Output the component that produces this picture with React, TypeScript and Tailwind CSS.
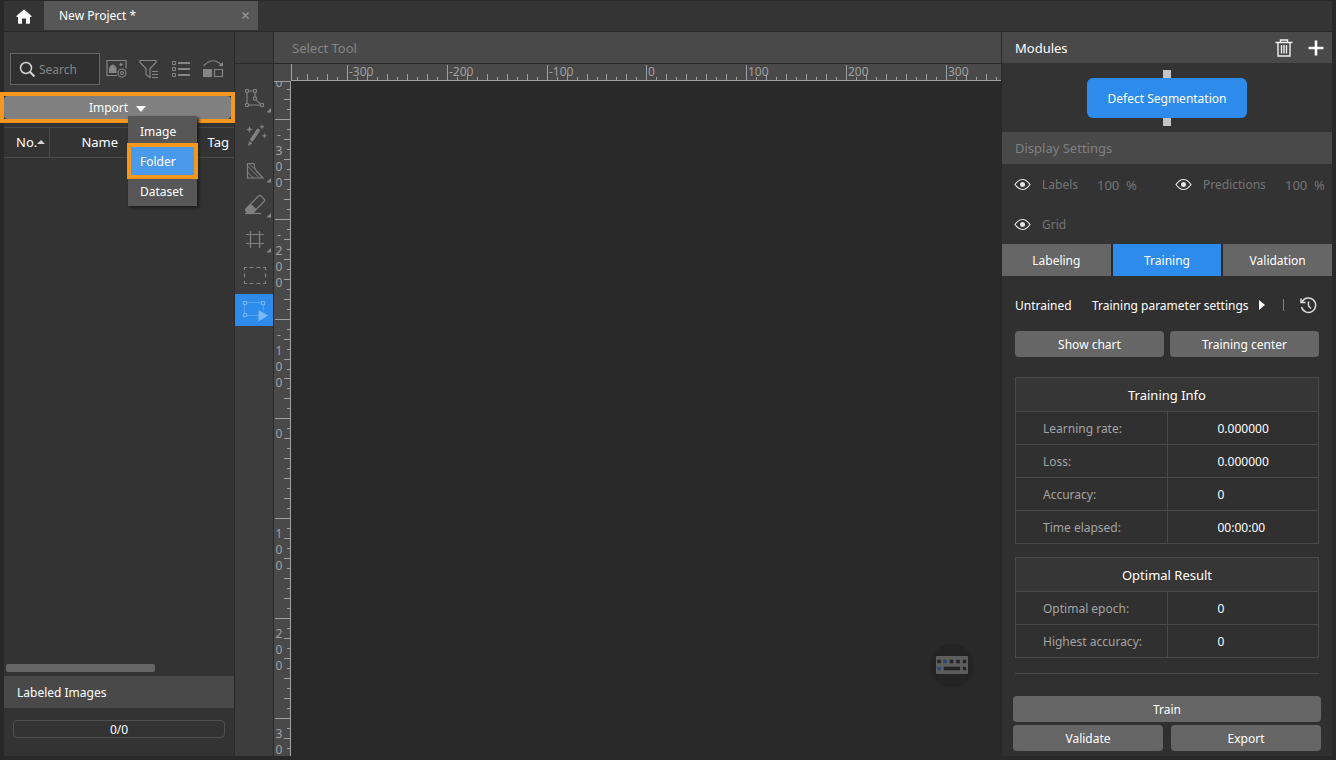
import { useEffect, useState } from "react";
import type { ReactNode } from "react";

const STEP = 9.98;
const ORIGIN_X = 355.9;
const ORIGIN_Y = 337.9;

// space taken by the panels and bars around the canvas
const SIDE_WIDTH = 626;
const BARS_HEIGHT = 85;

const tools = [
  "Polygon Tool",
  "Smart Labeling Tool",
  "Mask Tool",
  "Eraser Tool",
  "Grid Tool",
  "ROI Tool",
  "Select Tool",
];

const trainingInfo = [
  { label: "Learning rate:", value: "0.000000" },
  { label: "Loss:", value: "0.000000" },
  { label: "Accuracy:", value: "0" },
  { label: "Time elapsed:", value: "00:00:00" },
];

const optimalResult = [
  { label: "Optimal epoch:", value: "0" },
  { label: "Highest accuracy:", value: "0" },
];

function useCanvasSize() {
  const measure = () => ({
    width: window.innerWidth - SIDE_WIDTH,
    height: window.innerHeight - BARS_HEIGHT,
  });
  const [size, setSize] = useState(measure);

  useEffect(() => {
    const onResize = () => setSize(measure());
    window.addEventListener("resize", onResize);
    return () => window.removeEventListener("resize", onResize);
  }, []);

  return size;
}

// ruler marks that fall between 0 and length
function getMarks(origin: number, length: number) {
  const marks = [];
  for (let i = -45; origin + i * STEP < length; i++) {
    marks.push({ i, pos: Math.floor(origin + i * STEP) });
  }
  return marks;
}

function tickLength(i: number) {
  if (i % 10 === 0) return 16;
  return i % 2 === 0 ? 7 : 4;
}

function HorizontalRuler({ width }: { width: number }) {
  const marks = getMarks(ORIGIN_X, width).filter((mark) => mark.pos > 0);

  return (
    <svg className="h-[17px] min-w-0 flex-1" fill="#a0a0a0">
      <rect x="0" y="0" width="1" height="16" />
      <rect x="0" y="16" width="100%" height="1" />
      {marks.map(({ i, pos }) => (
        <g key={i}>
          <rect
            x={pos}
            y={17 - tickLength(i)}
            width="1"
            height={tickLength(i)}
          />
          {i % 10 === 0 && (
            <text x={pos + 2} y="12" fontSize="12">
              {i * 10}
            </text>
          )}
        </g>
      ))}
    </svg>
  );
}

function VerticalRuler({ height }: { height: number }) {
  const marks = getMarks(ORIGIN_Y, height);

  return (
    <svg className="w-[17px] shrink-0 bg-[#494949]" fill="#a0a0a0">
      <rect x="0" y="0" width="17" height="1" />
      <rect x="16" y="0" width="1" height="100%" />
      {marks
        .filter((mark) => mark.pos > 0)
        .map(({ i, pos }) => (
          <rect
            key={i}
            x={17 - tickLength(i)}
            y={pos}
            width={tickLength(i)}
            height="1"
          />
        ))}
      {marks
        .filter((mark) => mark.i % 10 === 0)
        .flatMap(({ i, pos }) =>
          String(i * 10)
            .split("")
            .map((char, n) => ({ char, id: `${i}-${n}`, y: pos + 20 + n * 16 })),
        )
        .filter(({ y }) => y > 2 && y < height)
        .map(({ char, id, y }) => (
          <text key={id} x="5" y={y} fontSize="12" textAnchor="middle">
            {char}
          </text>
        ))}
    </svg>
  );
}

function ToolIcon({ name }: { name: string }) {
  const corner = <path d="M36 24v4.500h-4.500z" fill="#8a8a8a" stroke="none" />;

  return (
    <svg
      width="38"
      height="32"
      viewBox="0 0 38 32"
      fill="none"
      stroke="#808080"
      strokeWidth="1.2"
    >
      {name === "Polygon Tool" && (
        <>
          <path d="M12 9v10M14 7h4M20 9v4M21.400 16.400l4.200 3.600M14 21h11" />
          <circle cx="12" cy="7" r="1.700" />
          <circle cx="20" cy="7" r="1.700" />
          <circle cx="20" cy="14.500" r="1.700" />
          <circle cx="27" cy="21" r="1.700" />
          <circle cx="12" cy="21" r="1.700" />
          {corner}
        </>
      )}
      {name === "Smart Labeling Tool" && (
        <>
          <path d="M17 20.500l6-9" strokeWidth="3.600" strokeLinecap="round" />
          <path d="M13.500 26.500l.8-4 2.700 1.800z" fill="#808080" strokeWidth=".6" />
          <path
            d="M14.500 7.500l.8 2.200 2.200.8-2.200.8-.8 2.200-.8-2.200-2.200-.8 2.200-.8zM27 5.500l.6 1.700 1.700.6-1.700.6-.6 1.700-.6-1.700-1.700-.6 1.700-.6zM29.500 14.500l.6 1.700 1.700.6-1.700.6-.6 1.700-.6-1.700-1.700-.6 1.700-.6z"
            fill="#808080"
            strokeWidth=".4"
          />
        </>
      )}
      {name === "Mask Tool" && (
        <>
          <path d="M12.500 9.500h6.500q0 5 3 8l6 6.500h-15.500z" />
          <path d="M14.500 10l5 5M12.500 12l12 12M12.500 18l6 6" strokeWidth="1" />
          {corner}
        </>
      )}
      {name === "Eraser Tool" && (
        <>
          <path d="M11 20L23.500 7q1.300-1.200 2.500 0l3 3q1.200 1.200 0 2.500L18 23.500q-1 1-2 1h-1.500q-1 0-2-1l-1.500-1.500q-.8-1 0-2z" />
          <path
            d="M15.500 15.500l5.500 5-3.500 4h-4l-2.500-2.500v-2z"
            fill="#808080"
          />
          <path d="M10 24.500h16" />
          {corner}
        </>
      )}
      {name === "Grid Tool" && (
        <>
          <path d="M15.500 7v17M24.500 7v17M11 10.500h18M11 19.500h18" />
          {corner}
        </>
      )}
      {name === "ROI Tool" && (
        <path d="M9.500 11V8.500h2.500M14.500 8.500h4M21.500 8.500h4M28 8.500h2.500V11M30.500 14.500v4M30.500 22v2.500H28M25.500 24.500h-4M18.500 24.500h-4M12 24.500H9.500V22M9.500 18.500v-4" />
      )}
      {name === "Select Tool" && (
        <g stroke="#6fb2f5">
          <path d="M12 8.500h14M9.500 11v8M28.500 11v5M12 21.500h12" opacity=".6" />
          <path d="M8.500 7.500h3v3h-3zM26.500 7.500h3v3h-3zM8.500 19.500h3v3h-3z" />
          <path d="M23.500 16v11.500l9.500-6z" fill="#7ab8f6" stroke="none" />
        </g>
      )}
    </svg>
  );
}

function EyeIcon() {
  return (
    <svg width="17" height="13" viewBox="0 0 17 13" fill="none" stroke="#e6e6e6">
      <path d="M1 6.500Q4.500 1.500 8.500 1.500T16 6.500Q12.500 11.500 8.500 11.500T1 6.500z" strokeWidth="1.200" />
      <circle cx="8.500" cy="6.500" r="2.500" fill="#e6e6e6" stroke="none" />
    </svg>
  );
}

function PanelButton({
  children,
  className,
}: {
  children: ReactNode;
  className: string;
}) {
  return (
    <button
      className={`h-[26px] rounded bg-[#666] pt-0.5 text-center ${className}`}
    >
      {children}
    </button>
  );
}

function InfoTable({
  title,
  rows,
}: {
  title: string;
  rows: { label: string; value: string }[];
}) {
  return (
    <table className="w-full border-collapse border border-[#4a4a4a]">
      <thead>
        <tr className="h-[34px] bg-[#363636]">
          <th colSpan={2} className="pt-0.5 text-[13px] font-normal">
            {title}
          </th>
        </tr>
      </thead>
      <tbody>
        {rows.map((row) => (
          <tr key={row.label} className="h-[33px] border-t border-[#4a4a4a]">
            <th
              scope="row"
              className="w-1/2 pt-0.5 pl-[27px] text-left font-normal text-[#a3a3a3]"
            >
              {row.label}
            </th>
            <td className="w-1/2 border-l border-[#4a4a4a] pt-0.5 pl-[50px]">
              {row.value}
            </td>
          </tr>
        ))}
      </tbody>
    </table>
  );
}

function ImagePanel() {
  return (
    <aside className="flex w-[230px] shrink-0 flex-col bg-[#333]">
      <div className="flex h-16 items-end bg-[#393939] pb-[11px] pl-1.5">
        <label className="flex h-8 w-[90px] items-center gap-[3px] border border-[#666] bg-[#303030] pl-2">
          <svg width="17" height="17" viewBox="0 0 17 17" fill="none" stroke="#d6d6d6" strokeWidth="1.500">
            <circle cx="7" cy="7" r="5.500" />
            <path d="M11 11l4.500 4.500" strokeWidth="2" />
          </svg>
          <input
            type="text"
            aria-label="Search"
            placeholder="Search"
            className="w-14 bg-transparent pt-0.5 placeholder:text-[#858585] focus:outline-none"
          />
        </label>
        <div className="flex h-8 items-center gap-3 pl-1.5">
          <button aria-label="Image settings">
            <svg width="21" height="20" viewBox="0 0 21 20" fill="none" stroke="#858585" strokeWidth="1.200">
              <path d="M11 16.500H1V1.500h19v8" />
              <path d="M3 14V9.500Q6.500 2 10.500 9v5z" fill="#858585" stroke="none" />
              <circle cx="15" cy="5.500" r="1.500" fill="#858585" stroke="none" />
              <circle cx="16" cy="14" r="4" />
              <circle cx="16" cy="14" r="1.500" />
            </svg>
          </button>
          <button aria-label="Filter">
            <svg width="20" height="20" viewBox="0 0 20 20" fill="none" stroke="#858585" strokeWidth="1.200">
              <path d="M1 1.500h16v2l-6 6v9l-4-3v-6l-6-6zM13 12.500h6M13 15.500h6M13 18.500h6" />
            </svg>
          </button>
          <button aria-label="List view">
            <svg width="20" height="20" viewBox="0 0 20 20" fill="none" stroke="#858585">
              <path d="M1.500 2.500h3v3h-3zM1.500 8.500h3v3h-3zM1.500 14.500h3v3h-3z" />
              <path d="M7 4h12M7 10h12M7 16h12" strokeWidth="2" />
            </svg>
          </button>
          <button aria-label="Swap view">
            <svg width="21" height="20" viewBox="0 0 21 20" fill="none" stroke="#858585" strokeWidth="1.200">
              <path d="M.5 7Q9.500 -3 18.500 6" />
              <path d="M20 3v4.500l-4.500-1z" fill="#858585" stroke="none" />
              <path d="M0 10h9v8H0z" fill="#858585" stroke="none" />
              <path d="M11.500 10.500h8v7h-8z" />
            </svg>
          </button>
        </div>
      </div>

      <div className="relative mr-[3px]">
        <button className="flex h-[23px] w-full items-center justify-center gap-2 rounded-sm bg-[#808080]">
          Import
          <svg width="10" height="6" viewBox="0 0 10 6" className="mt-0.5">
            <path d="M0 0h10L5 6z" fill="#fff" />
          </svg>
        </button>
        <div className="pointer-events-none absolute -inset-1 border-4 border-[#f5961d]" />

        {/* Import menu */}
        <ul className="absolute top-5 left-[124px] z-10 w-[69px] bg-[#575757] shadow-[2px_2px_3px_#1c1c1c]">
          {["Image", "Folder", "Dataset"].map((item) => (
            <li key={item} className="relative">
              <button
                className={`h-[30px] w-full pt-0.5 pl-3 text-left ${
                  item === "Folder" ? "bg-[#4a9aec]" : ""
                }`}
              >
                {item}
              </button>
              {item === "Folder" && (
                <div className="pointer-events-none absolute -inset-x-px -inset-y-[3px] border-4 border-[#f5961d]" />
              )}
            </li>
          ))}
        </ul>
      </div>

      <table className="mt-2 w-full table-fixed border-collapse">
        <thead>
          <tr className="h-[30px] border-y border-[#4a4a4a]">
            <th className="w-[45px] border-r border-[#4a4a4a] pl-3 text-left font-normal">
              <span className="flex items-center text-[13px]">
                No.
                <svg width="8" height="4" viewBox="0 0 8 4">
                  <path d="M0 4h8L4 0z" fill="#d6d6d6" />
                </svg>
              </span>
            </th>
            <th className="w-[101px] text-[13px] font-normal">Name</th>
            <th className="pr-[5px] text-right text-[13px] font-normal">Tag</th>
          </tr>
        </thead>
      </table>

      <div className="flex flex-1 flex-col justify-end px-0.5 pb-1">
        <div className="h-2 w-[149px] rounded-xs bg-[#666]" />
      </div>

      <h2 className="flex h-8 items-center bg-[#494949] pt-0.5 pl-[13px]">
        Labeled Images
      </h2>
      <div className="px-[9px] pt-3 pb-[18px]">
        <div
          role="progressbar"
          aria-label="Labeled Images"
          aria-valuenow={0}
          className="flex h-[18px] items-center justify-center rounded border border-[#505050] pt-0.5"
        >
          0/0
        </div>
      </div>
    </aside>
  );
}

function ModulePanel() {
  const [tab, setTab] = useState("Training");

  return (
    <aside className="flex w-[330px] shrink-0 flex-col bg-[#303030]">
      <div className="flex h-[31px] items-center bg-[#494949] pr-2 pl-[13px]">
        <h2 className="flex-1 pt-0.5 text-[13px]">Modules</h2>
        <button aria-label="Delete module" className="mr-[15px]">
          <svg width="18" height="18" viewBox="0 0 18 18" fill="none" stroke="#f0f0f0" strokeWidth="1.400">
            <path d="M.5 3.500h17M5.500 3V1h7v2M3 4v13h12V4M6.500 6v8.500M9 6v8.500M11.500 6v8.500" />
          </svg>
        </button>
        <button aria-label="Add module">
          <svg width="16" height="16" viewBox="0 0 16 16">
            <path d="M8 .5v15M.5 8h15" stroke="#fff" strokeWidth="2.600" />
          </svg>
        </button>
      </div>

      <div className="flex h-[69px] flex-col items-center justify-center bg-[#333]">
        <div className="h-2 w-2 bg-[#c4c4c4]" />
        <button className="h-10 w-40 rounded-md bg-[#2d8ceb] pt-0.5">
          Defect Segmentation
        </button>
        <div className="h-2 w-2 bg-[#c4c4c4]" />
      </div>

      <h2 className="flex h-8 items-center bg-[#494949] pt-0.5 pl-[13px] text-[13px] text-[#808080]">
        Display Settings
      </h2>
      <div className="grid h-20 grid-cols-[161px_1fr] bg-[#333] pl-3 text-[#757575]">
        <div className="flex items-center">
          <button aria-label="Toggle labels" className="mr-[11px]">
            <EyeIcon />
          </button>
          <span className="w-[55px] pt-0.5">Labels</span>
          <span className="pt-0.5 text-[13px]">100&nbsp; %</span>
        </div>
        <div className="flex items-center">
          <button aria-label="Toggle predictions" className="mr-[11px]">
            <EyeIcon />
          </button>
          <span className="w-[82px] pt-0.5">Predictions</span>
          <span className="pt-0.5 text-[13px]">100&nbsp; %</span>
        </div>
        <div className="flex items-center">
          <button aria-label="Toggle grid" className="mr-[11px]">
            <EyeIcon />
          </button>
          <span className="pt-0.5">Grid</span>
        </div>
      </div>

      <div className="grid grid-cols-3 gap-0.5 bg-[#292929]">
        {["Labeling", "Training", "Validation"].map((name) => (
          <button
            key={name}
            onClick={() => setTab(name)}
            className={`h-8 pt-0.5 ${tab === name ? "bg-[#2d8ceb]" : "bg-[#666]"}`}
          >
            {name}
          </button>
        ))}
      </div>

      <div className="px-[13px] pt-[17px]">
        <div className="flex h-6 items-center">
          <span className="w-[77px] pt-0.5">Untrained</span>
          <button className="flex items-center gap-2.5">
            <span className="pt-0.5">Training parameter settings</span>
            <svg width="6" height="10" viewBox="0 0 6 10">
              <path d="M0 0v10l6-5z" fill="#fff" />
            </svg>
          </button>
          <span className="mr-4 ml-auto h-3 w-px bg-[#808080]" />
          <button aria-label="Training history" className="mr-0.5">
            <svg width="17" height="17" viewBox="0 0 17 17" fill="none" stroke="#d9d9d9" strokeWidth="1.500">
              <path d="M2 5A7.200 7.200 0 1 1 1.500 10M1 1.500v4h4.500M8.500 4.500v4.500l2.500 2.500" />
            </svg>
          </button>
        </div>

        <div className="mt-3.5 flex gap-1.5">
          <PanelButton className="flex-1">Show chart</PanelButton>
          <PanelButton className="flex-1">Training center</PanelButton>
        </div>

        <div className="mt-5 flex flex-col gap-[13px]">
          <InfoTable title="Training Info" rows={trainingInfo} />
          <InfoTable title="Optimal Result" rows={optimalResult} />
        </div>
      </div>

      <div className="mt-auto px-[11px] pb-[5px]">
        <hr className="mx-0.5 mb-[22px] border-[#4a4a4a]" />
        <div className="grid grid-cols-2 gap-x-2 gap-y-[3px]">
          <PanelButton className="col-span-2">Train</PanelButton>
          <PanelButton className="w-full">Validate</PanelButton>
          <PanelButton className="w-full">Export</PanelButton>
        </div>
      </div>
    </aside>
  );
}

export default function App() {
  const [tool, setTool] = useState("Select Tool");
  const canvas = useCanvasSize();

  return (
    <div className="flex h-screen flex-col bg-[#292929] px-1 pt-px pb-1 font-['Noto_Sans','Noto_Sans_CJK_SC',sans-serif] text-xs text-white">
      <header className="flex h-[30px] shrink-0 bg-[#353535]">
        <button aria-label="Home" className="flex w-10 items-center justify-center">
          <svg width="16" height="15" viewBox="0 0 16 15">
            <path d="M8 .5Q8.500 .5 15.500 7v1H14v6q0 .8-.8.800H10V9.500H6v5.300H2.800Q2 14.800 2 14V8H.5V7Q7.500 .5 8 .5z" fill="#fff" />
          </svg>
        </button>
        <div className="flex h-[29px] w-[214px] items-center justify-between bg-[#575757] pr-2 pl-[15px]">
          <span>New Project *</span>
          <button aria-label="Close project">
            <svg width="9" height="9" viewBox="0 0 9 9">
              <path d="M1.500 1.500l6 6M7.500 1.500l-6 6" stroke="#999" strokeWidth="1.200" />
            </svg>
          </button>
        </div>
      </header>

      <main className="mt-px flex min-h-0 flex-1 gap-px">
        <ImagePanel />

        <nav className="flex w-[38px] shrink-0 flex-col bg-[#3d3d3d]">
          <div className="h-8 border-b border-[#292929]" />
          <div className="flex flex-col gap-[3px] pt-5">
            {tools.map((name) => (
              <button
                key={name}
                aria-label={name}
                onClick={() => setTool(name)}
                className={`h-8 ${tool === name ? "bg-[#2d8ceb]" : ""}`}
              >
                <ToolIcon name={name} />
              </button>
            ))}
          </div>
        </nav>

        <section className="flex min-w-0 flex-1 flex-col">
          <h1 className="flex h-8 shrink-0 items-center border-b border-[#292929] bg-[#494949] pt-[3px] pl-[18px] text-[13px] text-[#858585]">
            {tool}
          </h1>
          <div className="flex h-[17px] shrink-0 bg-[#494949] pl-[17px]">
            <HorizontalRuler width={canvas.width} />
          </div>
          <div className="relative flex min-h-0 flex-1">
            <VerticalRuler height={canvas.height} />
            <button
              aria-label="Keyboard"
              className="absolute right-7 bottom-[70px] flex h-[42px] w-[42px] items-center justify-center rounded-full bg-[#242424] shadow"
            >
              <svg width="32" height="18" viewBox="0 0 32 18">
                <rect width="32" height="18" rx="1" fill="#5e5e5e" />
                <path
                  d="M2 4.500h2v2h-2zM14.500 4.500h2v2h-2zM21 4.500h2v2h-2zM27.500 4.500h2v2h-2zM8.500 11.500h15v2h-15zM27.500 11.500h2v2h-2z"
                  fill="#242424"
                  stroke="#242424"
                  strokeWidth="1.500"
                />
                <path
                  d="M8 4.500h2v2h-2zM2 11.500h2v2h-2z"
                  fill="#264a78"
                  stroke="#264a78"
                  strokeWidth="1.500"
                />
              </svg>
            </button>
          </div>
        </section>

        <ModulePanel />
      </main>
    </div>
  );
}
